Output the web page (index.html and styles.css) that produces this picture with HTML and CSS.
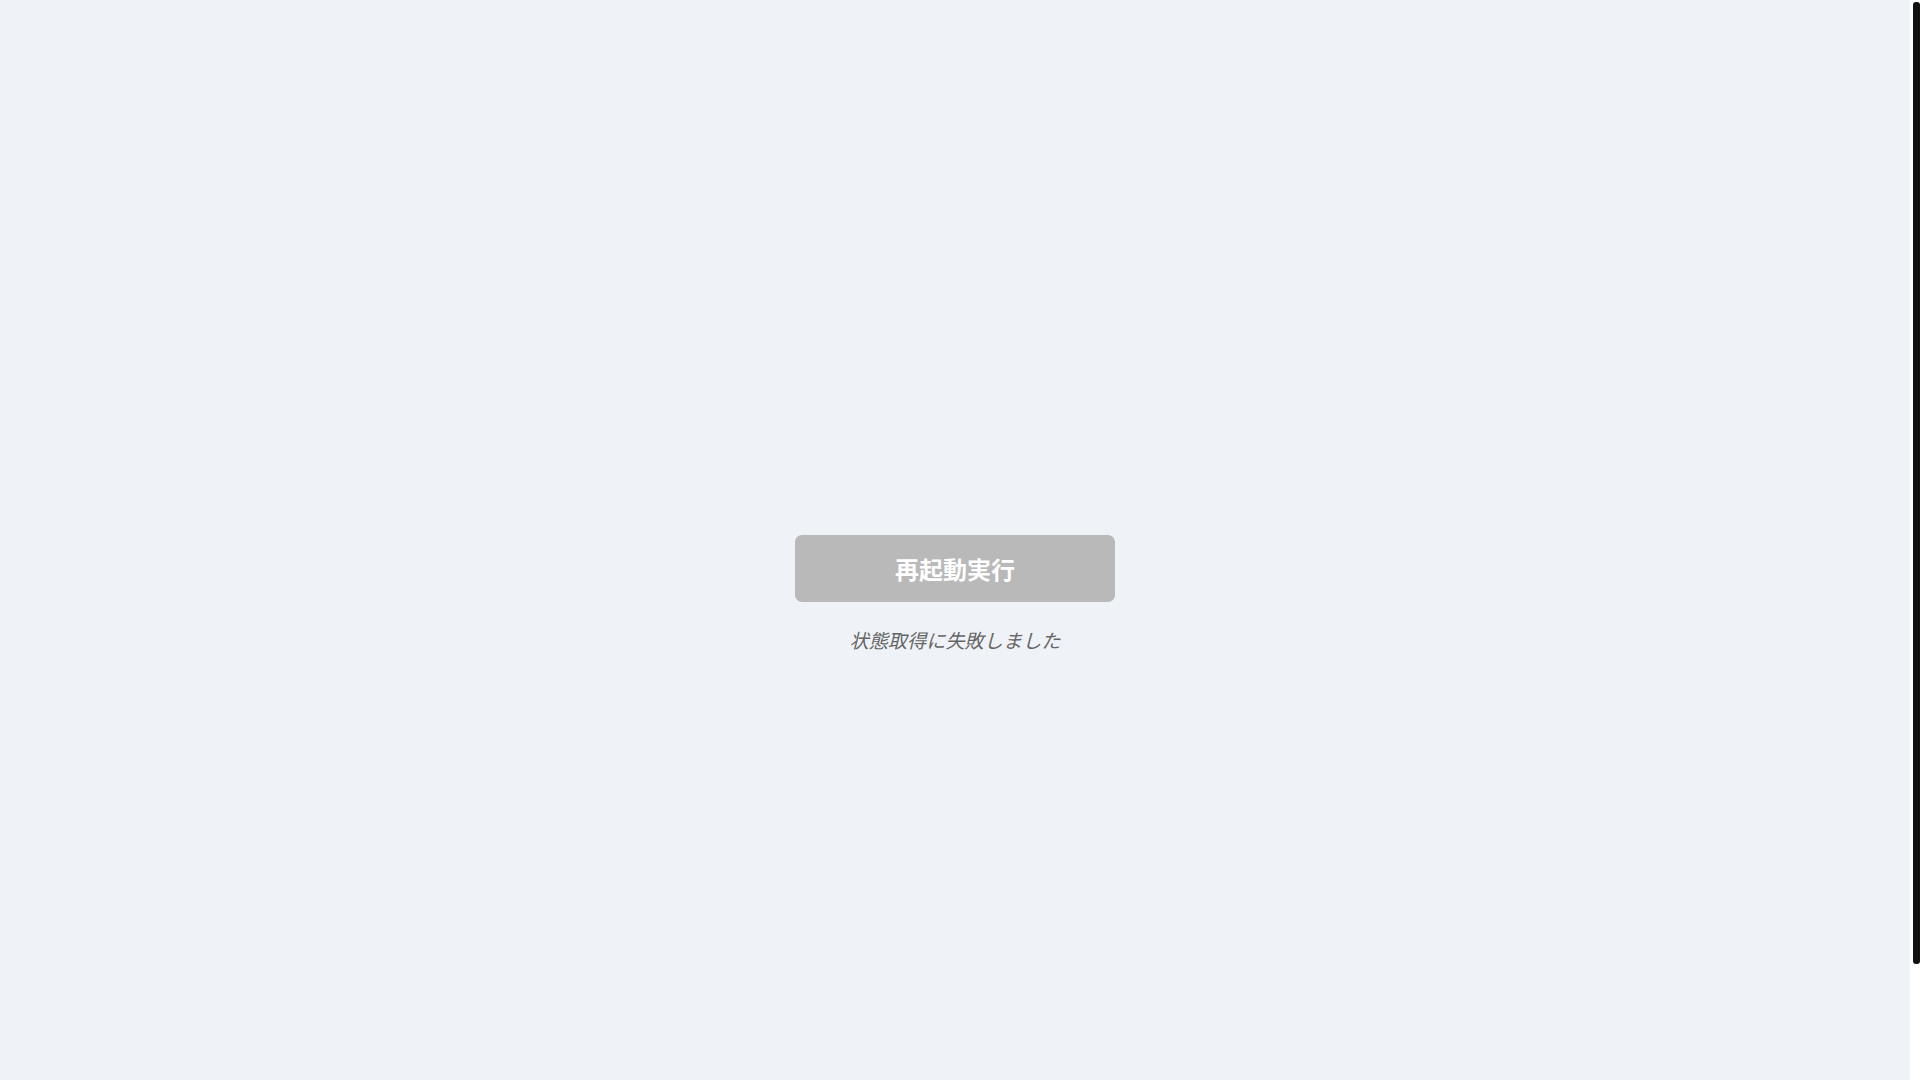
FILE: index.html
```html
<!DOCTYPE html>
<html lang="ja">
<head>
<meta charset="utf-8">
<title>再起動</title>
<link rel="stylesheet" href="styles.css">
</head>
<body>
<div class="frame">
  <main class="page">
    <section class="panel">
      <button class="restart-btn" type="button" disabled>再起動実行</button>
      <p class="status">状態取得に失敗しました</p>
    </section>
  </main>
  <div class="scroll-track" aria-hidden="true">
    <div class="scroll-thumb"></div>
  </div>
</div>
</body>
</html>
```
FILE: styles.css
```css
html, body {
  margin: 0;
  padding: 0;
  height: 100%;
  overflow: hidden;
}
body {
  background: #eff3f8;
  font-family: "Noto Sans CJK JP", "Noto Sans", sans-serif;
}
.frame {
  display: flex;
  height: 100vh;
}
.page {
  flex: 1;
  padding: 108px 0 0;
  box-sizing: border-box;
  height: 100vh;
  display: flex;
  flex-direction: column;
  align-items: center;
  justify-content: center;
}
.scroll-track {
  width: 10px;
  flex: none;
  background: #ffffff;
  padding: 2px 0 0 3px;
  box-sizing: border-box;
}
.scroll-thumb {
  height: 962px;
  background: #111111;
  border-radius: 3px;
}
.panel {
  display: flex;
  flex-direction: column;
  align-items: center;
}
.restart-btn {
  width: 320px;
  padding: 16px 0;
  border: none;
  border-radius: 7px;
  background: #b9b9b9;
  color: #ffffff;
  font-family: "Noto Sans CJK JP", "Noto Sans", sans-serif;
  font-size: 24px;
  font-weight: 700;
  line-height: 35px;
}
.status {
  margin: 24px 0 0;
  color: #666666;
  font-size: 19.2px;
  font-style: italic;
  line-height: 28px;
}
```
